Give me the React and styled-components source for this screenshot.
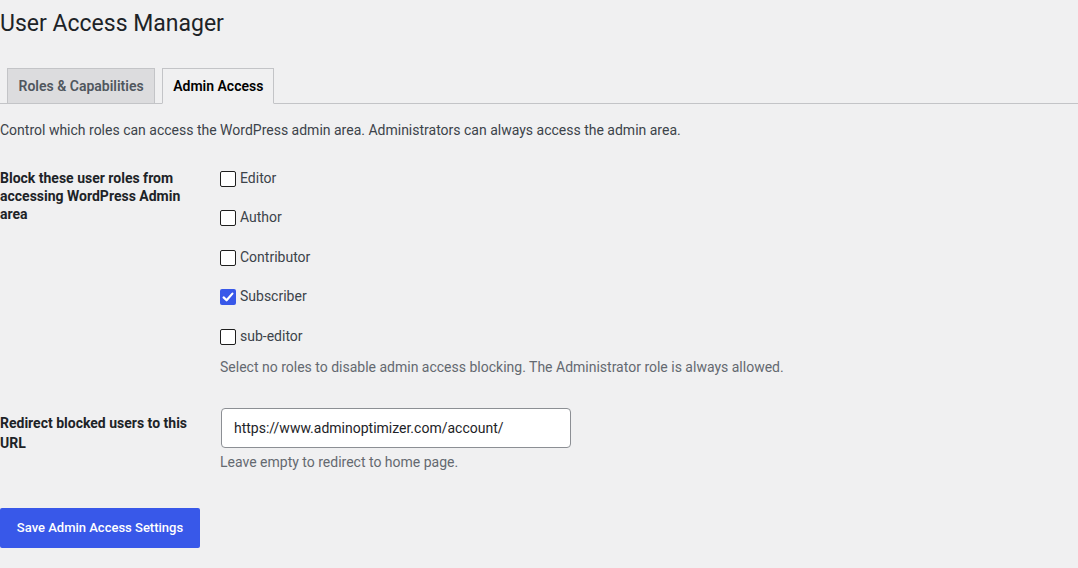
import React, { useState } from "react";
import styled, { createGlobalStyle } from "styled-components";

const GlobalStyle = createGlobalStyle`
  html, body {
    margin: 0;
    padding: 0;
    background: #f0f0f1;
  }
  body {
    font-family: Roboto, "Liberation Sans", sans-serif;
    font-size: 14px;
    color: #1d2327;
  }
`;

const roles = [
  { slug: "editor", name: "Editor" },
  { slug: "author", name: "Author" },
  { slug: "contributor", name: "Contributor" },
  { slug: "subscriber", name: "Subscriber" },
  { slug: "sub-editor", name: "sub-editor" },
];

const App = () => {
  const [blocked, setBlocked] = useState(["subscriber"]);
  const [url, setUrl] = useState("https://www.adminoptimizer.com/account/");

  const toggle = (slug) => {
    setBlocked((prev) =>
      prev.includes(slug) ? prev.filter((s) => s !== slug) : [...prev, slug]
    );
  };

  return (
    <Wrap>
      <GlobalStyle />
      <Title>User Access Manager</Title>
      <Tabs>
        <Tab>Roles &amp; Capabilities</Tab>
        <Tab active>Admin Access</Tab>
      </Tabs>
      <Intro>
        Control which roles can access the WordPress admin area. Administrators
        can always access the admin area.
      </Intro>

      <FormTable>
        <FormRow>
          <Label lh={18} pt={20}>
            Block these user roles from accessing WordPress Admin area
          </Label>
          <Field pt={16.5}>
            <RoleList>
              {roles.map((role) => {
                const checked = blocked.includes(role.slug);
                return (
                  <RoleItem key={role.slug}>
                    <Box checked={checked}>
                      <input
                        type="checkbox"
                        checked={checked}
                        onChange={() => toggle(role.slug)}
                      />
                      {checked && (
                        <svg viewBox="0 0 16 16" width="16" height="16">
                          <path
                            d="M3.6 8.4 L6.6 11.3 L12.4 4.6"
                            fill="none"
                            stroke="#fff"
                            strokeWidth="2.2"
                            strokeLinecap="round"
                            strokeLinejoin="round"
                          />
                        </svg>
                      )}
                    </Box>
                    {role.name}
                  </RoleItem>
                );
              })}
            </RoleList>
            <Hint mt={9.5}>
              Select no roles to disable admin access blocking. The
              Administrator role is always allowed.
            </Hint>
          </Field>
        </FormRow>

        <FormRow>
          <Label lh={20} pt={19.5}>
            Redirect blocked users to this URL
          </Label>
          <Field pt={14.5}>
            <UrlInput
              type="text"
              value={url}
              onChange={(e) => setUrl(e.currentTarget.value)}
            />
            <Hint mt={4.5}>Leave empty to redirect to home page.</Hint>
          </Field>
        </FormRow>
      </FormTable>

      <SaveButton>Save Admin Access Settings</SaveButton>
    </Wrap>
  );
};

export default App;

const Wrap = styled.div`
  padding-bottom: 20px;
`;

const Title = styled.h1`
  margin: 0 0 20px;
  padding: 9px 0 0;
  font-size: 23px;
  font-weight: 400;
  line-height: 30px;
  color: #1d2327;
`;

const Tabs = styled.div`
  display: flex;
  align-items: flex-end;
  padding-top: 9px;
  border-bottom: 1px solid #c3c4c7;
`;

const Tab = styled.div`
  margin-left: 7px;
  margin-bottom: -1px;
  padding: 5px ${(p) => (p.active ? "10px" : "10.5px")};
  border: 1px solid #c3c4c7;
  border-bottom-color: ${(p) => (p.active ? "#f0f0f1" : "#c3c4c7")};
  background: ${(p) => (p.active ? "#f0f0f1" : "#dcdcde")};
  color: ${(p) => (p.active ? "#000" : "#50575e")};
  font-size: 14px;
  font-weight: 600;
  line-height: 24px;
  cursor: pointer;
`;

const Intro = styled.p`
  margin: 16px 0 0;
  line-height: 21px;
  color: #3c434a;
`;

const FormTable = styled.div`
  margin-top: 8px;
`;

const FormRow = styled.div`
  display: flex;
`;

const Label = styled.div`
  width: 190px;
  flex: none;
  padding: ${(p) => p.pt}px 10px 0 0;
  font-weight: 700;
  line-height: ${(p) => p.lh}px;
  color: #1d2327;
`;

const Field = styled.div`
  padding: ${(p) => p.pt}px 10px 15px 20px;
`;

const RoleList = styled.div`
  display: flex;
  flex-direction: column;
  gap: 15.5px;
`;

const RoleItem = styled.label`
  display: flex;
  align-items: center;
  height: 24px;
  color: #3c434a;
  cursor: pointer;
`;

const Box = styled.span`
  position: relative;
  width: 16px;
  height: 16px;
  box-sizing: border-box;
  margin: 2px 4px 0 0;
  border: ${(p) => (p.checked ? "none" : "1.5px solid #1e1e1e")};
  border-radius: 2px;
  background: ${(p) => (p.checked ? "#3858e9" : "#fff")};

  input {
    position: absolute;
    inset: 0;
    margin: 0;
    opacity: 0;
    cursor: pointer;
  }
  svg {
    position: absolute;
    left: 0;
    top: 0;
    pointer-events: none;
  }
`;

const Hint = styled.p`
  margin: ${(p) => p.mt}px 0 0;
  line-height: 21px;
  color: #646970;
`;

const UrlInput = styled.input`
  display: block;
  box-sizing: border-box;
  width: 350px;
  height: 40px;
  margin-left: 1px;
  padding: 0 12px;
  border: 1px solid #8c8f94;
  border-radius: 4px;
  background: #fff;
  font-family: Roboto, "Liberation Sans", sans-serif;
  font-size: 14px;
  color: #1d2327;
  outline: none;
`;

const SaveButton = styled.button`
  display: block;
  margin-top: 19.5px;
  width: 200px;
  height: 40px;
  padding: 0 12px;
  border: none;
  border-radius: 2px;
  background: #3858e9;
  color: #fff;
  font-family: Roboto, "Liberation Sans", sans-serif;
  font-size: 13px;
  font-weight: 500;
  white-space: nowrap;
  cursor: pointer;
`;
